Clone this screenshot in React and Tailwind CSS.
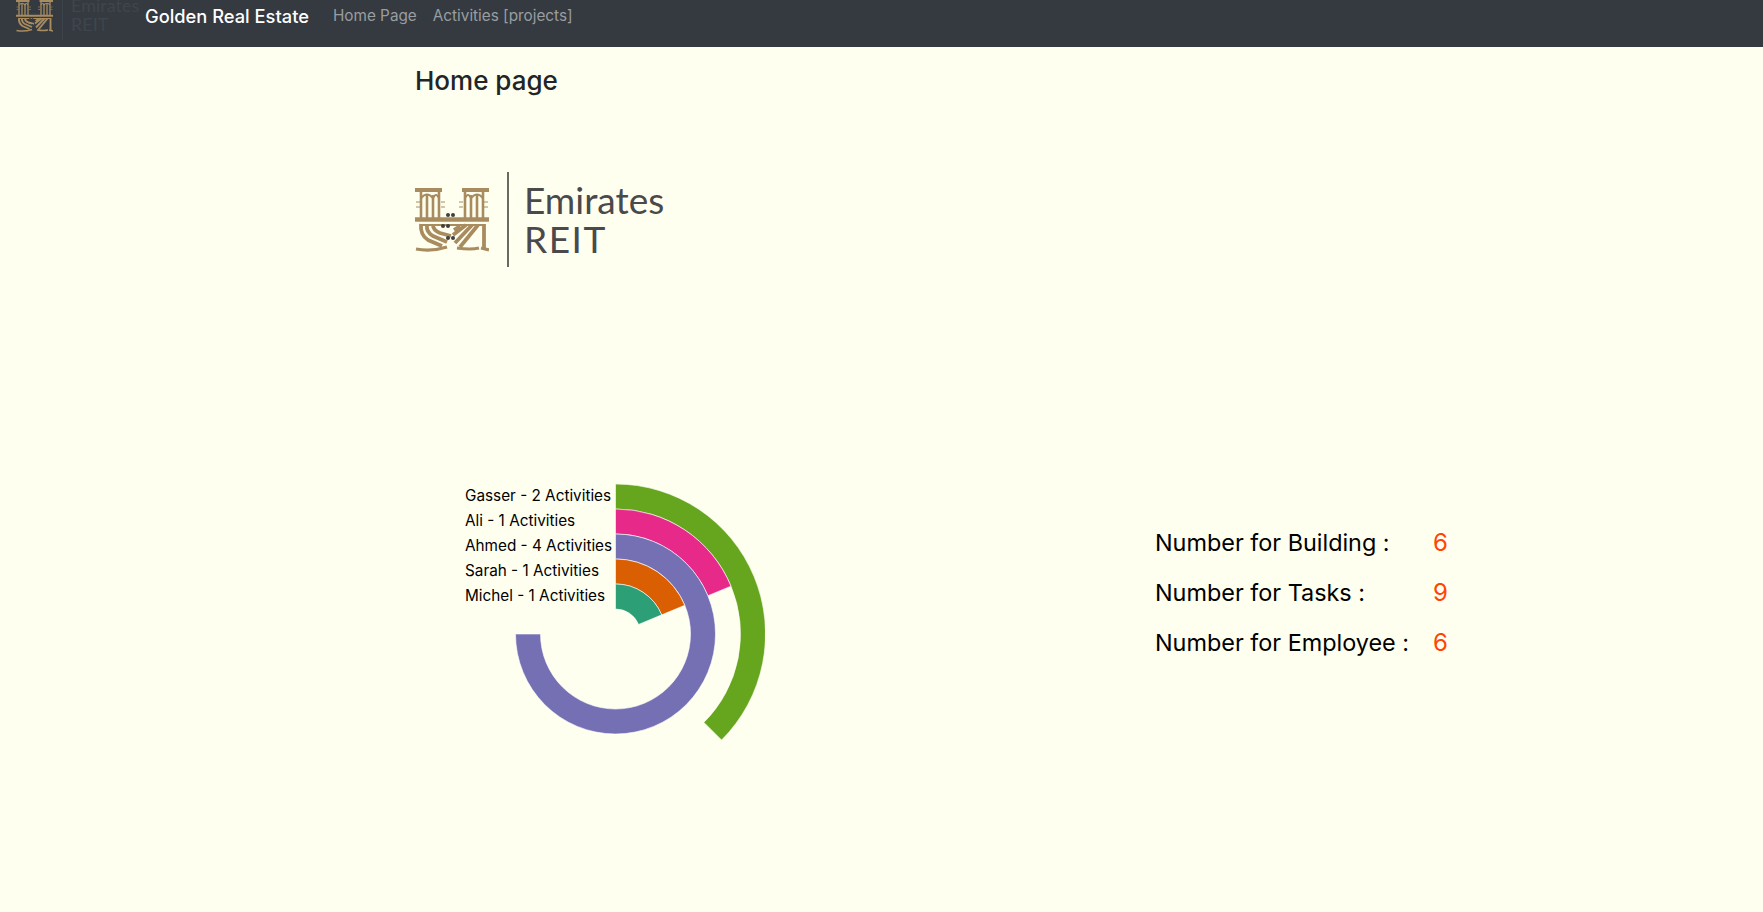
const arcPath = (r0, r1, deg) => {
  const a = (deg * Math.PI) / 180;
  const large = deg > 180 ? 1 : 0;
  const sx = (r) => (r * Math.sin(a)).toFixed(2);
  const sy = (r) => (-r * Math.cos(a)).toFixed(2);
  return `M0 ${-r1} A${r1} ${r1} 0 ${large} 1 ${sx(r1)} ${sy(r1)} L${sx(r0)} ${sy(r0)} A${r0} ${r0} 0 ${large} 0 0 ${-r0} Z`;
};

const people = [
  { label: 'Gasser - 2 Activities', color: '#66a61e', r0: 125, r1: 150, deg: 135 },
  { label: 'Ali - 1 Activities', color: '#e7298a', r0: 100, r1: 125, deg: 67.5 },
  { label: 'Ahmed - 4 Activities', color: '#7570b3', r0: 75, r1: 100, deg: 270 },
  { label: 'Sarah - 1 Activities', color: '#d95f02', r0: 50, r1: 75, deg: 67.5 },
  { label: 'Michel - 1 Activities', color: '#2c9f77', r0: 25, r1: 50, deg: 67.5 },
];

const stats = [
  { label: 'Number for Building :', value: 6 },
  { label: 'Number for Tasks :', value: 9 },
  { label: 'Number for Employee :', value: 6 },
];

const LogoMark = ({ className }) => (
  <svg viewBox="0 0 74 64" className={className} fill="none" stroke="#a88c5f">
    {/* towers */}
    <path d="M0 2H27M47 2H74" strokeWidth="4" />
    <path d="M6 3V31M12 7V31M18 7V31M24 3V31M50 3V31M56 7V31M62 7V31M68 3V31" strokeWidth="2.6" />
    <path d="M6 10Q12 3 18 10Q21 4 24 10M50 10Q53 4 56 10Q62 3 68 10" strokeWidth="2.2" />
    <path d="M26 14H30M26 19H30M44 14H48M44 19H48M69 14H73M69 19H73M1 14H5M1 19H5" strokeWidth="1.2" />
    {/* band */}
    <path d="M0 31.5H74" strokeWidth="4.4" />
    <path d="M5 37H69" strokeWidth="2" />
    {/* calligraphy */}
    <path d="M6 36Q5 47 13 52L27 58M12 37Q11 44 18 48L32 54M18 37Q18 42 25 45L36 48" strokeWidth="3.8" />
    <path d="M69 36V60M63 37L45 59M57 37L40 55M51 37L38 47M45 38L39 42" strokeWidth="3.8" />
    <path d="M1 61Q16 64 32 59M42 60Q56 62 64 60M66 60L74 62" strokeWidth="3.2" />
    <g fill="#3f3f3f" stroke="none">
      <circle cx="33" cy="27" r="2" />
      <circle cx="38" cy="27" r="2" />
      <circle cx="28" cy="38" r="2" />
      <circle cx="33" cy="38" r="2" />
      <circle cx="33" cy="50" r="2" />
      <circle cx="38" cy="50" r="2" />
    </g>
  </svg>
);

const Logo = ({ small }) =>
  small ? (
    <div className="flex items-center h-[36px] w-[127px] shrink-0 overflow-visible">
      <LogoMark className="w-[37px] h-[32px] shrink-0" />
      <div className="w-px h-[47px] bg-[#3d434a] ml-[9px] shrink-0" />
      <div className="ml-[8px] -mt-[3px] text-[#3f454c] text-[18px] leading-[19px] font-['Lato',sans-serif]">
        <div>Emirates</div>
        <div>REIT</div>
      </div>
    </div>
  ) : (
    <div className="flex items-center w-[250px] h-[95px]">
      <LogoMark className="w-[74px] h-[64px] shrink-0" />
      <div className="w-[2px] h-[95px] bg-[#6b6962] ml-[18px] shrink-0" />
      <div className="ml-[15px] -mt-[2px] text-[#4a494b] text-[37px] leading-[39px] font-['Lato',sans-serif]">
        <div>Emirates</div>
        <div className="tracking-[1.5px]">REIT</div>
      </div>
    </div>
  );

export default function App() {
  return (
    <div className="min-h-[912px] bg-[#fffff0] font-['Inter',sans-serif] overflow-hidden">
      <nav className="h-[47px] bg-[#343a40] flex items-center pl-[16px] pb-[15px]">
        <Logo small />
        <a className="ml-[2px] text-[18.3px] leading-[30px] text-white font-medium">Golden Real Estate</a>
        <a className="ml-[24px] mt-px text-[15.3px] text-[#9a9da0]">Home Page</a>
        <a className="ml-[16px] mt-px text-[15.3px] text-[#9a9da0]">Activities [projects]</a>
      </nav>

      <main className="w-[933px] ml-[415px]">
        <h4 className="mt-[19px] text-[26px] leading-[30px] font-medium text-[#212529]">Home page</h4>
        <div className="mt-[76px]">
          <Logo />
        </div>
        <div className="mt-[217px] flex items-start">
          <svg width="350" height="300" viewBox="-200.5 -150 350 300" className="block shrink-0">
            {people.map((p) => (
              <path key={p.label} d={arcPath(p.r0, p.r1, p.deg)} fill={p.color} stroke="#ffffff" strokeWidth="0.6" />
            ))}
            {people.map((p, i) => (
              <text key={p.label} x="-150.5" y={-150 + 17 + i * 25} fontSize="15.3" fill="#000000">
                {p.label}
              </text>
            ))}
          </svg>
          <div className="ml-[390px] mt-[42px] flex flex-col gap-[16px] text-[23.4px] leading-[34px] text-black">
            {stats.map((s) => (
              <div key={s.label} className="flex">
                <span className="w-[278px]">{s.label}</span>
                <span className="text-[24px] text-[#ff4500]">{s.value}</span>
              </div>
            ))}
          </div>
        </div>
      </main>
    </div>
  );
}
